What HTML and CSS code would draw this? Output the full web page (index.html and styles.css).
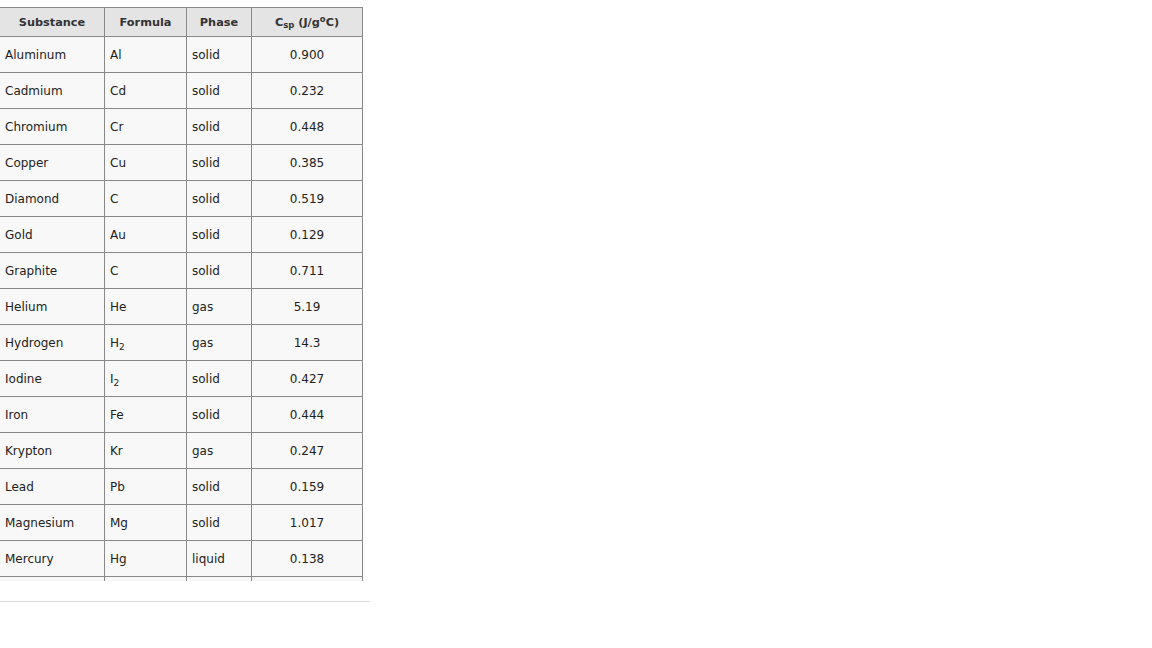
FILE: index.html
```html
<!DOCTYPE html>
<html>
<head>
<meta charset="utf-8">
<link rel="stylesheet" href="styles.css">
</head>
<body>
<div class="wrap">
  <div class="scroller">
    <table class="heat">
      <thead>
        <tr><th class="c1">Substance</th><th class="c2">Formula</th><th class="c3">Phase</th><th class="c4">C<sub>sp</sub> (J/g<sup>o</sup>C)</th></tr>
      </thead>
      <tbody>
        <tr><td>Aluminum</td><td>Al</td><td>solid</td><td class="num">0.900</td></tr>
        <tr><td>Cadmium</td><td>Cd</td><td>solid</td><td class="num">0.232</td></tr>
        <tr><td>Chromium</td><td>Cr</td><td>solid</td><td class="num">0.448</td></tr>
        <tr><td>Copper</td><td>Cu</td><td>solid</td><td class="num">0.385</td></tr>
        <tr><td>Diamond</td><td>C</td><td>solid</td><td class="num">0.519</td></tr>
        <tr><td>Gold</td><td>Au</td><td>solid</td><td class="num">0.129</td></tr>
        <tr><td>Graphite</td><td>C</td><td>solid</td><td class="num">0.711</td></tr>
        <tr><td>Helium</td><td>He</td><td>gas</td><td class="num">5.19</td></tr>
        <tr><td>Hydrogen</td><td>H<sub>2</sub></td><td>gas</td><td class="num">14.3</td></tr>
        <tr><td>Iodine</td><td>I<sub>2</sub></td><td>solid</td><td class="num">0.427</td></tr>
        <tr><td>Iron</td><td>Fe</td><td>solid</td><td class="num">0.444</td></tr>
        <tr><td>Krypton</td><td>Kr</td><td>gas</td><td class="num">0.247</td></tr>
        <tr><td>Lead</td><td>Pb</td><td>solid</td><td class="num">0.159</td></tr>
        <tr><td>Magnesium</td><td>Mg</td><td>solid</td><td class="num">1.017</td></tr>
        <tr><td>Mercury</td><td>Hg</td><td>liquid</td><td class="num">0.138</td></tr>
        <tr><td></td><td></td><td></td><td class="num"></td></tr>
      </tbody>
    </table>
  </div>
  <div class="rule"></div>
</div>
</body>
</html>
```
FILE: styles.css
```css
html, body {
  margin: 0;
  padding: 0;
  background: #fff;
}
body {
  font-family: "DejaVu Sans", Verdana, sans-serif;
  font-size: 12px;
  color: #222;
}
.wrap {
  width: 370px;
  padding-top: 7px;
}
.scroller {
  height: 574px;
  overflow: hidden;
}
.heat {
  border-collapse: collapse;
  margin-left: -1px;
  table-layout: fixed;
  width: 364px;
}
.heat th, .heat td {
  border: 1px solid #888;
  padding: 0 5px;
  text-align: left;
  white-space: nowrap;
}
.heat th {
  background: #e4e4e4;
  height: 28px;
  font-size: 11.3px;
  font-weight: bold;
  text-align: center;
  color: #333;
}
.heat td {
  background: #f8f8f8;
  height: 35px;
}
.heat .c1 { width: 94px; }
.heat .c2 { width: 71px; }
.heat .c3 { width: 54px; }
.heat .c4 { width: 100px; }
.heat td.num { text-align: center; }
sub, sup {
  font-size: 75%;
  line-height: 0;
  position: relative;
}
sub { vertical-align: baseline; top: 0.35em; }
sup { vertical-align: baseline; top: -0.45em; }
.rule {
  margin-top: 20px;
  border-top: 1px solid #ddd;
}
```
